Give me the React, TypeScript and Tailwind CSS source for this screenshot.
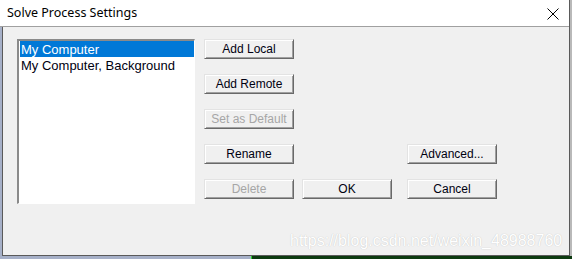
import type { ReactNode } from "react";

function Button({
  children,
  disabled,
  className = "",
}: {
  children: ReactNode;
  disabled?: boolean;
  className?: string;
}) {
  return (
    <button
      type="button"
      disabled={disabled}
      className={`flex h-[20px] w-[90px] items-center justify-center border border-t-[#e3e3e3] border-l-[#e3e3e3] border-r-[#696969] border-b-[#696969] bg-[#f0f0f0] text-[12px] leading-none shadow-[inset_1px_1px_0_#ffffff,inset_-1px_-1px_0_#a0a0a0] ${
        disabled ? "text-[#a6a6a6]" : "text-[#000010]"
      } ${className}`}
    >
      {children}
    </button>
  );
}

const sites = ["My Computer", "My Computer, Background"];

export default function App() {
  return (
    <div className="relative flex h-[259px] w-[572px] flex-col overflow-hidden bg-[#b9b9b9] font-['Liberation_Sans',Arial,sans-serif]">
      <div className="flex h-[256px] w-[570px] flex-col border-r border-[#5a5a5a]">
        {/* title bar */}
        <div className="flex h-[27px] shrink-0 items-center justify-between border-b border-[#a0a0a0] bg-white pl-[7px] pr-[10px]">
          <span className="font-['Noto_Sans',sans-serif] text-[12.5px] text-black">
            Solve Process Settings
          </span>
          <svg width="12" height="12" viewBox="0 0 12 12" className="mt-[1px]">
            <path d="M0.5 0.5 L11.5 11.5 M11.5 0.5 L0.5 11.5" stroke="#000" strokeWidth="1" />
          </svg>
        </div>

        <div className="flex flex-1">
          <div className="w-[2px] bg-[#a6b0c8]" />
          <div className="flex flex-1 items-start border-b border-l border-[#5a5a5a] bg-[#f0f0f0] pl-[14px] pt-[12px]">
            {/* list box */}
            <div className="h-[165px] w-[178px] border-t-2 border-l-2 border-r border-b border-t-[#8a8a8a] border-l-[#8a8a8a] border-r-white border-b-white bg-white text-[13px] leading-[17px]">
              {sites.map((s, i) => (
                <div
                  key={s}
                  className={`ml-[1px] h-[16px] pl-[1px] ${
                    i === 0 ? "bg-[#0078d7] text-white" : "text-[#000010]"
                  }`}
                >
                  {s}
                </div>
              ))}
            </div>

            {/* buttons */}
            <div className="ml-[9px] grid grid-cols-[98px_105px_90px] gap-y-[15px]">
              <Button className="col-start-1">Add Local</Button>
              <Button className="col-start-1">Add Remote</Button>
              <Button className="col-start-1" disabled>
                Set as Default
              </Button>
              <Button className="col-start-1">Rename</Button>
              <Button className="col-start-3">Advanced...</Button>
              <Button className="col-start-1" disabled>
                Delete
              </Button>
              <Button>OK</Button>
              <Button>Cancel</Button>
            </div>
          </div>
        </div>
      </div>

      <div className="flex h-[3px]">
        <div className="w-[251px] bg-[#a6b0c8]" />
        <div className="w-[1px] bg-[#2bd12b]" />
        <div className="flex-1 bg-[#0c3a10]" />
      </div>

      {/* watermark */}
      <div className="absolute left-[290px] top-[229px] text-[16px] text-white [text-shadow:0_0_1px_#b8b8b8]">
        https://blog.csdn.net/weixin_48988760
      </div>
    </div>
  );
}
